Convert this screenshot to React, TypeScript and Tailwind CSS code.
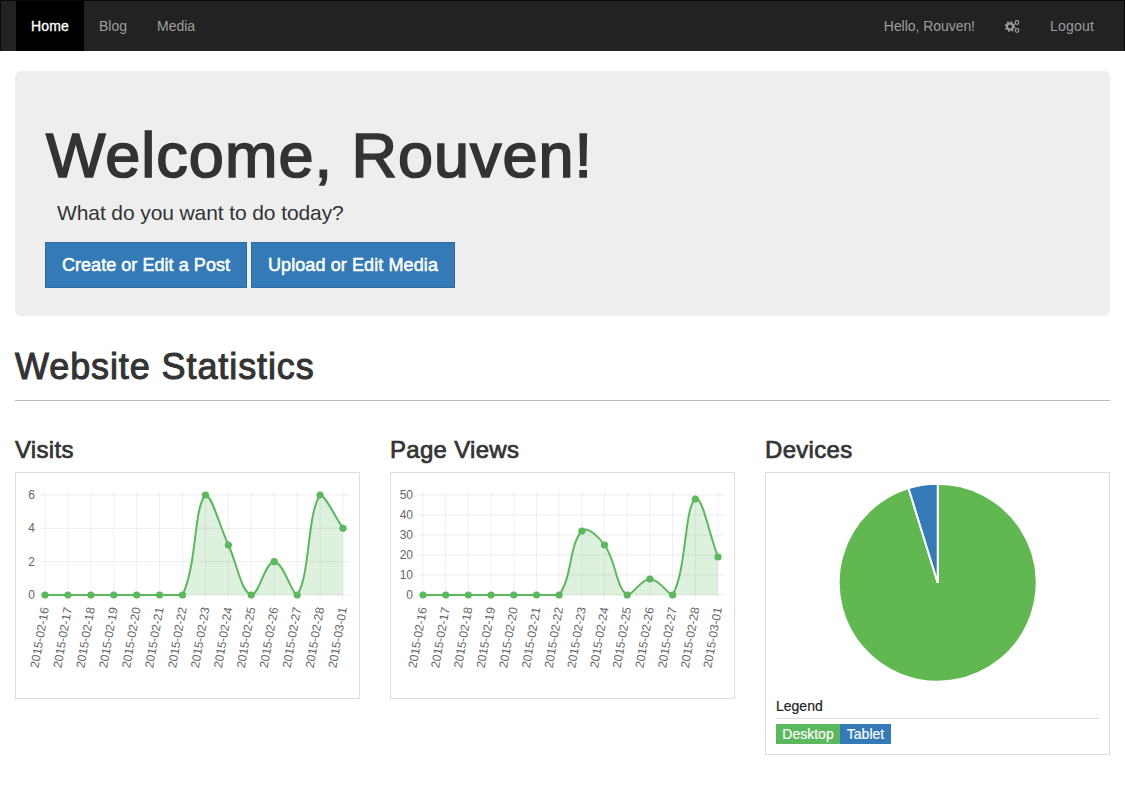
const DATES = [
  '2015-02-16', '2015-02-17', '2015-02-18', '2015-02-19', '2015-02-20', '2015-02-21', '2015-02-22',
  '2015-02-23', '2015-02-24', '2015-02-25', '2015-02-26', '2015-02-27', '2015-02-28', '2015-03-01',
];

const VISITS = [0, 0, 0, 0, 0, 0, 0, 6, 3, 0, 2, 0, 6, 4];
const VIEWS = [0, 0, 0, 0, 0, 0, 0, 32, 25, 0, 8, 0, 48, 19];

const TOP = 495;
const BOTTOM = 595;

type Pt = { x: number; y: number };

// same spline the old Chart.js line charts use, control points capped to the scale
function smoothPath(pts: Pt[], tension = 0.4) {
  const clamp = (v: number) => Math.min(BOTTOM, Math.max(TOP, v));
  let d = `M${pts[0].x} ${pts[0].y}`;
  const ctrl = pts.map((p, i) => {
    const prev = pts[Math.max(i - 1, 0)];
    const next = pts[Math.min(i + 1, pts.length - 1)];
    const d01 = Math.hypot(p.x - prev.x, p.y - prev.y);
    const d12 = Math.hypot(next.x - p.x, next.y - p.y);
    const total = d01 + d12 || 1;
    const fa = (tension * d01) / total;
    const fb = (tension * d12) / total;
    return {
      ix: p.x - fa * (next.x - prev.x),
      iy: clamp(p.y - fa * (next.y - prev.y)),
      ox: p.x + fb * (next.x - prev.x),
      oy: clamp(p.y + fb * (next.y - prev.y)),
    };
  });
  for (let i = 1; i < pts.length; i++) {
    d += ` C${ctrl[i - 1].ox} ${ctrl[i - 1].oy} ${ctrl[i].ix} ${ctrl[i].iy} ${pts[i].x} ${pts[i].y}`;
  }
  return d;
}

function LineChart({
  originX,
  firstX,
  lastX,
  axisLeft,
  values,
  max,
  ticks,
}: {
  originX: number;
  firstX: number;
  lastX: number;
  axisLeft: number;
  values: number[];
  max: number;
  ticks: number[];
}) {
  const step = (lastX - firstX) / (values.length - 1);
  const pts = values.map((v, i) => ({
    x: firstX + i * step,
    y: BOTTOM - (v / max) * (BOTTOM - TOP),
  }));
  const line = smoothPath(pts);
  const area = `${line} L${lastX} ${BOTTOM} L${firstX} ${BOTTOM} Z`;

  return (
    <svg viewBox={`${originX} 473 343 225`} className="block w-[343px] h-[225px]">
      {ticks.map((t) => {
        const y = BOTTOM - (t / max) * (BOTTOM - TOP);
        return (
          <g key={t}>
            <line x1={axisLeft} x2={lastX + 7} y1={y} y2={y} stroke="#000" strokeOpacity={0.07} />
            <text x={axisLeft - 5} y={y + 4} textAnchor="end" fill="#666" className="text-[12px]">
              {t}
            </text>
          </g>
        );
      })}
      {pts.map((p) => (
        <line key={p.x} x1={p.x} x2={p.x} y1={491} y2={600} stroke="#000" strokeOpacity={0.06} />
      ))}
      <path d={area} fill="#5cb85c" fillOpacity={0.2} />
      <path d={line} fill="none" stroke="#5cb85c" strokeWidth={2} />
      {pts.map((p) => (
        <circle key={p.x} cx={p.x} cy={p.y} r={3.6} fill="#5cb85c" />
      ))}
      {pts.map((p, i) => (
        <text
          key={p.x}
          transform={`translate(${p.x + 4} 608) rotate(-80)`}
          textAnchor="end"
          fill="#666"
          className="text-[12px]"
        >
          {DATES[i]}
        </text>
      ))}
    </svg>
  );
}

function PieChart() {
  const cx = 937.7;
  const cy = 582.7;
  const r = 99;
  const a = (17.14 * Math.PI) / 180;
  const ex = cx - r * Math.sin(a);
  const ey = cy - r * Math.cos(a);
  return (
    <svg viewBox="766 473 343 223" className="block w-[343px] h-[223px]">
      <path
        d={`M${cx} ${cy} L${cx} ${cy - r} A${r} ${r} 0 1 1 ${ex} ${ey} Z`}
        fill="#61b851"
        stroke="#fff"
        strokeWidth={2}
      />
      <path
        d={`M${cx} ${cy} L${ex} ${ey} A${r} ${r} 0 0 1 ${cx} ${cy - r} Z`}
        fill="#337ab7"
        stroke="#fff"
        strokeWidth={2}
      />
    </svg>
  );
}

// fa-cogs at this size reads as one big gear and two small rings
function CogsIcon() {
  return (
    <svg viewBox="0 0 15 15" className="w-[15px] h-[15px]" fill="none" stroke="currentColor">
      <circle cx="5" cy="7.5" r="3" strokeWidth="2" />
      <circle cx="5" cy="7.5" r="4.6" strokeWidth="1.6" strokeDasharray="1.8 1.8" />
      <circle cx="12" cy="3.5" r="1.8" strokeWidth="1.2" />
      <circle cx="12" cy="11.5" r="1.8" strokeWidth="1.2" />
    </svg>
  );
}

export default function App() {
  return (
    <div className="min-h-[805px] bg-white text-[#333] font-['Liberation_Sans',Arial,sans-serif] text-[14px]">
      {/* Navbar */}
      <nav className="h-[51px] bg-[#222] border-x border-t border-[#080808] px-[15px] flex justify-between text-[#9d9d9d]">
        <ul className="flex">
          <li className="px-[15px] leading-[50px] bg-black text-white tracking-[0.15px] [-webkit-text-stroke:0.3px_#fff]">Home</li>
          <li className="px-[15px] leading-[50px]">Blog</li>
          <li className="px-[15px] leading-[50px]">Media</li>
        </ul>
        <ul className="flex">
          <li className="px-[15px] leading-[50px] tracking-[-0.05px]">Hello, Rouven!</li>
          <li className="px-[15px] flex items-center">
            <CogsIcon />
          </li>
          <li className="px-[15px] leading-[50px] tracking-[0.2px]">Logout</li>
        </ul>
      </nav>

      <main className="px-[15px] pt-[20px]">
        {/* Jumbotron */}
        <section className="h-[245px] rounded-md bg-[#eee] px-[30px] pt-[50px]">
          <h1 className="ml-[1px] text-[63px] leading-[69px] tracking-[1px] [-webkit-text-stroke:1.7px_#333]">
            Welcome, Rouven!
          </h1>
          <p className="mt-[8px] pl-[12px] text-[21px] leading-[30px] tracking-[-0.1px]">What do you want to do today?</p>
          <div className="mt-[14px] flex gap-[4px]">
            <a className="h-[46px] w-[202px] flex items-center justify-center bg-[#337ab7] border border-[#2e6da4] text-white text-[18px] tracking-[0.05px] [-webkit-text-stroke:0.5px_#fff]">
              Create or Edit a Post
            </a>
            <a className="h-[46px] w-[204px] flex items-center justify-center bg-[#337ab7] border border-[#2e6da4] text-white text-[18px] tracking-[0.1px] [-webkit-text-stroke:0.5px_#fff]">
              Upload or Edit Media
            </a>
          </div>
        </section>

        {/* Statistics */}
        <div className="mt-[31px] h-[54px] border-b border-[#bbb]">
          <h2 className="text-[36px] leading-[40px] tracking-[0.9px] [-webkit-text-stroke:1px_#333]">
            Website Statistics
          </h2>
        </div>

        <div className="mt-[36px] grid grid-cols-3 gap-[30px] items-start">
          <div>
            <h3 className="text-[24px] leading-[26px] mb-[9px] tracking-[0.3px] [-webkit-text-stroke:0.7px_#333]">Visits</h3>
            <div className="border border-[#ddd]">
              <LineChart originX={16} firstX={45} lastX={343} axisLeft={40} values={VISITS} max={6} ticks={[0, 2, 4, 6]} />
            </div>
          </div>
          <div>
            <h3 className="text-[24px] leading-[26px] mb-[9px] tracking-[0.3px] [-webkit-text-stroke:0.7px_#333]">Page Views</h3>
            <div className="border border-[#ddd]">
              <LineChart originX={391} firstX={423} lastX={718} axisLeft={418} values={VIEWS} max={50} ticks={[0, 10, 20, 30, 40, 50]} />
            </div>
          </div>
          <div>
            <h3 className="text-[24px] leading-[26px] mb-[9px] tracking-[0.3px] [-webkit-text-stroke:0.7px_#333]">Devices</h3>
            <div className="border border-[#ddd]">
              <PieChart />
              <div className="px-[10px] pb-[10px]">
                <div className="h-[23px] leading-[20px] border-b border-[#ddd] text-[#222] [-webkit-text-stroke:0.2px_#222]">Legend</div>
                <div className="mt-[5px] flex text-white leading-[20px] [-webkit-text-stroke:0.2px_#fff]">
                  <span className="w-[64px] text-center bg-[#5cb85c]">Desktop</span>
                  <span className="w-[51px] text-center bg-[#337ab7]">Tablet</span>
                </div>
              </div>
            </div>
          </div>
        </div>
      </main>
    </div>
  );
}
